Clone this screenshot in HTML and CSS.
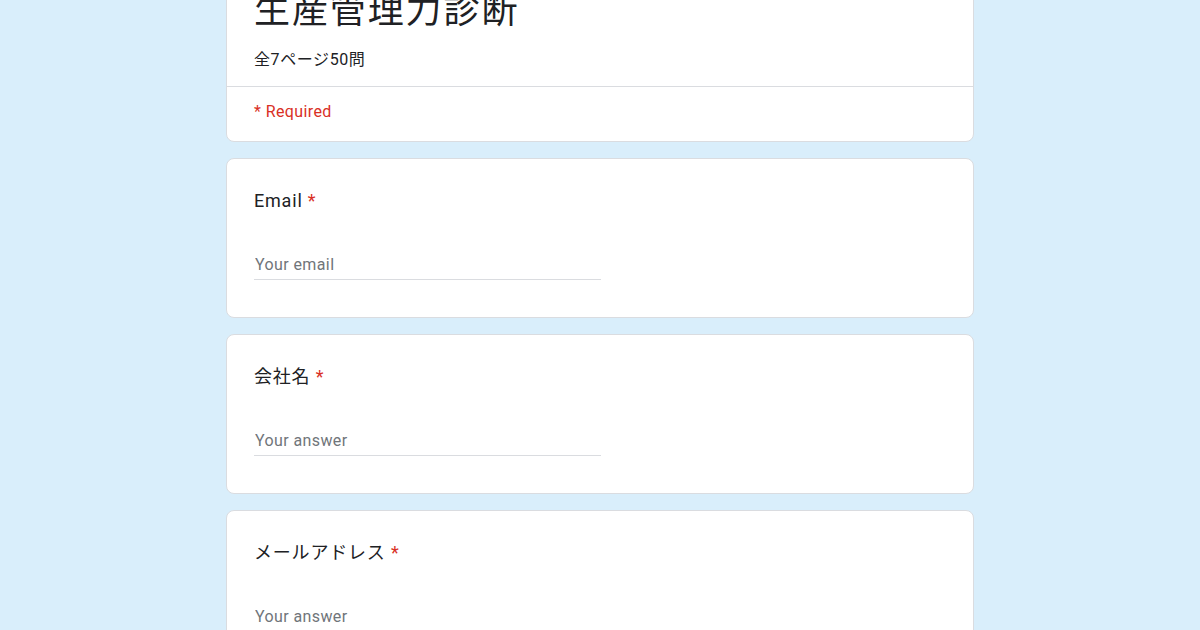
FILE: index.html
```html
<!DOCTYPE html>
<html lang="ja">
<head>
<meta charset="utf-8">
<title>生産管理力診断</title>
<link rel="stylesheet" href="styles.css">
</head>
<body>
<main class="form">
  <section class="card head-card">
    <div class="head">
      <h1 class="title">生産管理力診断</h1>
      <p class="desc">全7ページ50問</p>
    </div>
    <div class="required-note">* Required</div>
  </section>

  <section class="card q-card">
    <div class="q-label">Email <span class="star">*</span></div>
    <input class="q-input" type="email" placeholder="Your email">
  </section>

  <section class="card q-card">
    <div class="q-label">会社名 <span class="star">*</span></div>
    <input class="q-input" type="text" placeholder="Your answer">
  </section>

  <section class="card q-card">
    <div class="q-label">メールアドレス <span class="star">*</span></div>
    <input class="q-input" type="text" placeholder="Your answer">
  </section>
</main>
</body>
</html>
```

FILE: styles.css
```css
html, body {
  margin: 0;
  padding: 0;
}

body {
  background: #d9eefb;
  font-family: Roboto, "Noto Sans CJK JP", sans-serif;
  color: #202124;
  overflow: hidden;
  height: 630px;
}

.form {
  width: 748px;
  margin: -37px auto 0;
  display: flex;
  flex-direction: column;
  gap: 16px;
}

.card {
  background: #ffffff;
  border: 1px solid #dadce0;
  border-radius: 8px;
  box-sizing: border-box;
}

.head {
  padding: 21px 27px 14px;
  border-bottom: 1px solid #dadce0;
}

.title {
  margin: 0;
  font-family: "Noto Sans CJK JP", sans-serif;
  font-weight: 400;
  font-size: 36px;
  line-height: 44px;
  letter-spacing: 1.9px;
  color: #202124;
}

.desc {
  margin: 19px 0 0;
  font-family: Roboto, "Noto Sans CJK JP", sans-serif;
  font-size: 16px;
  line-height: 24px;
  letter-spacing: 0.6px;
  color: #202124;
}

.required-note {
  padding: 13px 27px 17px;
  font-size: 16px;
  line-height: 24px;
  letter-spacing: 0.4px;
  color: #d93025;
}

.q-card {
  height: 160px;
  padding: 30px 27px 0;
}

.q-label {
  font-family: Roboto, "Noto Sans CJK JP", sans-serif;
  font-size: 18px;
  line-height: 24px;
  letter-spacing: 0.8px;
  color: #202124;
}

.star {
  color: #d93025;
}

.q-input {
  display: block;
  margin: 42px 0 0;
  width: 346px;
  height: 20px;
  padding: 0 0 4px 1px;
  border: none;
  border-bottom: 1px solid #dadce0;
  outline: none;
  background: transparent;
  font-family: Roboto, sans-serif;
  font-size: 16px;
  line-height: 20px;
  letter-spacing: 0.4px;
  color: #202124;
}

.q-input::placeholder {
  color: #70757a;
  opacity: 1;
}
```
